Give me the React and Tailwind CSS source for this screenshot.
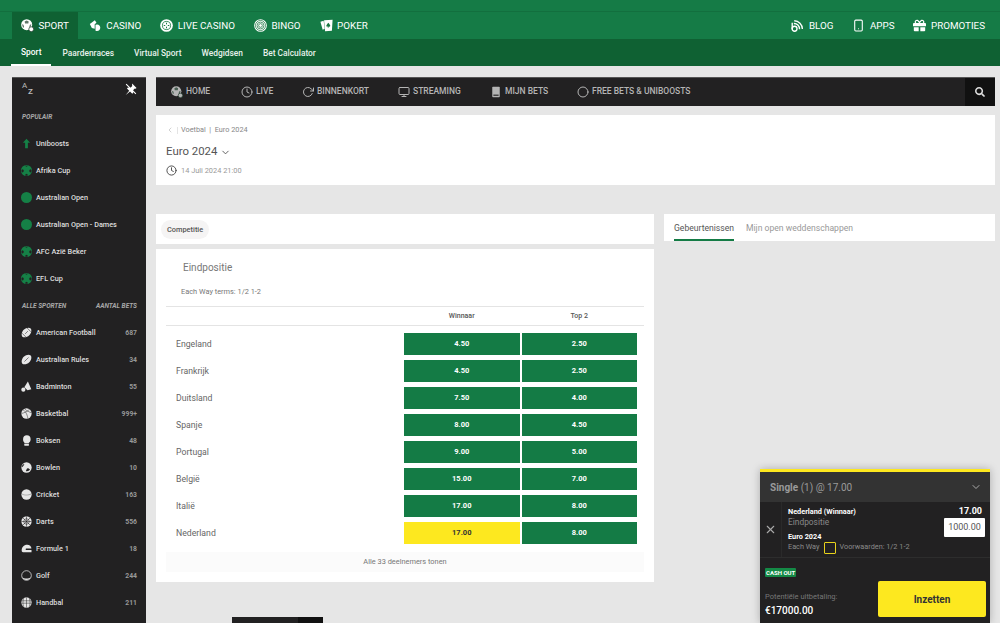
import React from "react";
import { FaSearch, FaGift } from "react-icons/fa";
import { FiClock, FiChevronDown, FiChevronLeft, FiX, FiMonitor, FiCircle, FiSmartphone, FiRotateCw } from "react-icons/fi";

const Ball = ({ className = "" }) => (
  <svg viewBox="0 0 16 16" className={className}>
    <circle cx="8" cy="8" r="8" fill="currentColor" />
    <path d="M5.800 1.200 8 2.600l2.200-1.400zM1.800 6.200 4 7.400 3.600 10 1.600 11 .4 8.500zM14.200 6.200 12 7.400l.4 2.600 2 1 1.200-2.500zM6 14 8 12.800 10 14l-.6 1.800H6.600z" fill="#222122" />
  </svg>
);

const SportBall = ({ className = "" }) => (
  <svg viewBox="0 0 16 16" className={className}>
    <circle cx="7" cy="7" r="6.800" fill="currentColor" />
    <path d="M4.500 3 7 1.800 9.500 3 9 5.500H5zM1.200 6.500 3 7l.8 2.500L2.600 11zM12.800 6.500 11 7l-.8 2.500 1.200 1.500z" fill="#1c3a2a" opacity="0.7" />
    <circle cx="12.600" cy="12.600" r="3" fill="currentColor" stroke="#1c3a2a" strokeWidth="0.900" />
  </svg>
);

const Casino = ({ className = "" }) => (
  <svg viewBox="0 0 16 16" className={className} fill="currentColor">
    <path d="M1 6 7.200 1.500l2 3.200L7 6.500v5.500L3.500 11z" />
    <path d="M8 7.200a4 4 0 1 1 1.500 7.500c-.8 0-1.200-.3-1.500-.7z" />
  </svg>
);

const LiveCasino = ({ className = "" }) => (
  <svg viewBox="0 0 16 16" className={className}>
    <circle cx="8" cy="8" r="7.800" fill="currentColor" />
    <circle cx="8" cy="8" r="5" fill="none" stroke="#16763f" strokeWidth="1" />
    <path d="M8 4.600v6.800M4.600 8h6.800" stroke="#16763f" strokeWidth="1.200" />
    <circle cx="8" cy="8" r="1.600" fill="currentColor" />
  </svg>
);

const Bingo = ({ className = "" }) => (
  <svg viewBox="0 0 16 16" className={className}>
    <circle cx="8" cy="8" r="7.800" fill="currentColor" />
    <circle cx="8" cy="8" r="6.200" fill="none" stroke="#16763f" strokeWidth="0.900" />
    <circle cx="8" cy="8" r="4.200" fill="none" stroke="#16763f" strokeWidth="0.900" />
    <circle cx="8" cy="8" r="2.300" fill="none" stroke="#16763f" strokeWidth="0.900" />
  </svg>
);

const Poker = ({ className = "" }) => (
  <svg viewBox="0 0 16 16" className={className} fill="currentColor">
    <path d="M.5 3.400 4.500 2l1.200 10-2.400 1.200z" />
    <path d="M5 1.600 15.500 1 14.600 14.400 6.200 15z" />
    <path d="M10.200 4.600c1.600 2 2.600 2.900 2.400 4-.2 1-1.400 1.200-2 .4l.4 1.500H9.400l.4-1.500c-.7.8-1.900.5-2-.5-.1-1 .9-1.900 2.400-3.900z" fill="#16763f" />
  </svg>
);

const Blog = ({ className = "" }) => (
  <svg viewBox="0 0 16 16" className={className} fill="none" stroke="currentColor" strokeWidth="1.700">
    <path d="M1.500 4.500v8" />
    <circle cx="4.400" cy="12" r="3" />
    <path d="M3.500 5.500a6.800 6.800 0 0 1 7 7" />
    <path d="M4 2.200a10.200 10.200 0 0 1 10 10" />
  </svg>
);

const Pin = ({ className = "" }) => (
  <svg viewBox="0 0 16 16" className={className} fill="currentColor">
    <path d="M9.500.6 15.400 6.500l-1.300 1.100-1-.3-2.400 2.400.3 3.400-1.300 1.300-3-3-5.900 4.800 4.800-5.900-3-3 1.300-1.300 3.400.3 2.400-2.400-.3-1z" />
    <path d="M1.500 1.500 14.500 14.500" stroke="currentColor" strokeWidth="1.500" />
  </svg>
);

const Boost = ({ className = "" }) => (
  <svg viewBox="0 0 16 16" className={className} fill="currentColor">
    <path d="M8 1 13.200 7H10v8H6V7H2.800z" />
  </svg>
);

const Shuttle = ({ className = "" }) => (
  <svg viewBox="0 0 16 16" className={className} fill="currentColor">
    <path d="M10 .8 15 12l-5.500 1.600L4.800 9z" />
    <circle cx="3.400" cy="12.600" r="3" />
  </svg>
);

const Glove = ({ className = "" }) => (
  <svg viewBox="0 0 16 16" className={className} fill="currentColor">
    <path d="M3 6c0-3 2-5.500 5.500-5.500S14 3 14 6s-1.200 4-2.500 5v1H4.800v-1.300C3.800 9.800 3 8.500 3 6z" />
    <rect x="4.800" y="12.800" width="6.700" height="2.700" rx="0.500" />
  </svg>
);

const Bowl = ({ className = "" }) => (
  <svg viewBox="0 0 16 16" className={className}>
    <circle cx="8" cy="8" r="7.500" fill="currentColor" />
    <path d="M1 8c2-1 3-3 4-5-2 0-4 2-4 5zM7 13c1.500-2 1-4 3-4 1 0 2 1 3 2-1 2-4 3-6 2z" fill="#222122" />
  </svg>
);

const Cricket = ({ className = "" }) => (
  <svg viewBox="0 0 16 16" className={className}>
    <circle cx="8" cy="8" r="7.500" fill="currentColor" />
    <path d="M.8 7c4 2.400 10 2.400 14.400 0" stroke="#222122" strokeWidth="0.700" fill="none" strokeDasharray="1 0.600" />
  </svg>
);

const Darts = ({ className = "" }) => (
  <svg viewBox="0 0 16 16" className={className}>
    <circle cx="8" cy="8" r="7.500" fill="currentColor" />
    <path d="M8 .5v15M.5 8h15M2.700 2.700l10.600 10.600M13.300 2.700 2.700 13.300" stroke="#222122" strokeWidth="0.800" />
    <circle cx="8" cy="8" r="4" fill="none" stroke="#222122" strokeWidth="0.800" />
  </svg>
);

const Helmet = ({ className = "" }) => (
  <svg viewBox="0 0 16 16" className={className} fill="currentColor">
    <path d="M1 11C1 6 4 2.500 9 2.500c3.500 0 6 2.500 6.200 5.500H7.500c-1 0-1 2 0 2h7.800v3.500H3C1.800 13.500 1 12.500 1 11z" />
  </svg>
);

const Golf = ({ className = "" }) => (
  <svg viewBox="0 0 16 16" className={className}>
    <circle cx="8" cy="8" r="7" fill="none" stroke="currentColor" strokeWidth="1.100" />
    <path d="M1.500 10a7 7 0 0 0 13 0c-3 3-10 3-13 0z" fill="currentColor" />
  </svg>
);

const Handball = ({ className = "" }) => (
  <svg viewBox="0 0 16 16" className={className}>
    <circle cx="8" cy="8" r="7.500" fill="currentColor" />
    <path d="M1 5.500h14M.6 9h14.800M8 .5v15M4 1.500c-1.500 4-1.500 9 0 13M12 1.500c1.500 4 1.500 9 0 13" stroke="#222122" strokeWidth="0.700" fill="none" />
  </svg>
);

const Aussie = ({ className = "" }) => (
  <svg viewBox="0 0 16 16" className={className}>
    <path d="M2 14C0 12 1 7 4 4s8-4 10-2 1 7-2 10-8 4-10 2z" fill="currentColor" />
    <path d="M5 11 11 5" stroke="#222122" strokeWidth="0.800" />
  </svg>
);

const American = ({ className = "" }) => (
  <svg viewBox="0 0 16 16" className={className}>
    <path d="M2 14C0 12 1 7 4 4s8-4 10-2 1 7-2 10-8 4-10 2z" fill="currentColor" />
    <path d="M1.500 9 7 14.500M9 1.500 14.500 7" stroke="#222122" strokeWidth="0.800" />
    <path d="M6 10l4-4" stroke="#222122" strokeWidth="0.800" />
  </svg>
);

const Basket = ({ className = "" }) => (
  <svg viewBox="0 0 16 16" className={className}>
    <circle cx="8" cy="8" r="7.500" fill="currentColor" />
    <path d="M2.700 2.700c3 1 6 5 7.300 12.500M.8 8c4-1 9-3 11.800-6.500M5 1c3 3 7 5 10.500 6" stroke="#222122" strokeWidth="0.700" fill="none" />
  </svg>
);

const Slip2 = ({ className = "" }) => (
  <svg viewBox="0 0 16 16" className={className} fill="currentColor">
    <rect x="3" y="1" width="10" height="14" rx="1" />
    <rect x="4.500" y="11.500" width="7" height="1.500" fill="#222122" />
  </svg>
);

const NavItem = ({ icon: I, label, active }) => (
  <div className={`flex items-center gap-[4.5px] h-full ${active ? "bg-[#0f6133] pl-[9px] pr-[9px]" : ""}`}>
    <I className="w-[13px] h-[13px] shrink-0 text-white" />
    <span className="text-[9.8px] leading-none text-white">{label}</span>
  </div>
);

const SubItem = ({ label, active }) => (
  <div className={`h-full flex items-center pt-[1px] text-[8.4px] font-medium ${active ? "border-b-2 border-white text-white px-[10px]" : "text-[#e8f1ec]"}`}>{label}</div>
);

const popular = [
  ["Uniboosts", Boost],
  ["Afrika Cup", Ball],
  ["Australian Open", "dot"],
  ["Australian Open - Dames", "dot"],
  ["AFC Azië Beker", Ball],
  ["EFL Cup", Ball],
];

const sports = [
  ["American Football", "687", American],
  ["Australian Rules", "34", Aussie],
  ["Badminton", "55", Shuttle],
  ["Basketbal", "999+", Basket],
  ["Boksen", "48", Glove],
  ["Bowlen", "10", Bowl],
  ["Cricket", "163", Cricket],
  ["Darts", "556", Darts],
  ["Formule 1", "18", Helmet],
  ["Golf", "244", Golf],
  ["Handbal", "211", Handball],
];

const odds = [
  ["Engeland", "4.50", "2.50"],
  ["Frankrijk", "4.50", "2.50"],
  ["Duitsland", "7.50", "4.00"],
  ["Spanje", "8.00", "4.50"],
  ["Portugal", "9.00", "5.00"],
  ["België", "15.00", "7.00"],
  ["Italië", "17.00", "8.00"],
  ["Nederland", "17.00", "8.00"],
];

const Dot = ({ className = "" }) => (
  <svg viewBox="0 0 16 16" className={className} fill="currentColor"><circle cx="8" cy="8" r="8" /></svg>
);

const Sidebar = () => (
  <aside className="w-[134px] shrink-0 bg-[#222122] h-[560px] overflow-hidden border-t border-[#555]">
    <div className="h-[22px] flex items-center justify-between pl-[10px] pr-[9px] text-[#bbb]">
      <div className="relative w-[14px] h-[14px] text-[8px] leading-none">
        <span className="absolute left-0 top-0">A</span>
        <span className="absolute left-[6px] top-[6px] font-bold">Z</span>
      </div>
      <Pin className="w-[12px] h-[12px] text-white" />
    </div>
    <div className="h-[30px] pt-[6px] flex items-center pl-[10px] text-[6.5px] italic font-bold text-[#a8a8a8]">POPULAIR</div>
    {popular.map(([n, I]) => {
      const C = I === "dot" ? Dot : I;
      return (
        <div key={n} className="h-[27px] flex items-center pl-[9px]">
          <C className="w-[11px] h-[11px] text-[#158046] mr-[4px] shrink-0" />
          <span className="pt-[2px] text-[7.3px] font-medium text-[#dedede] whitespace-nowrap">{n}</span>
        </div>
      );
    })}
    <div className="h-[27px] pt-[2px] flex items-center justify-between pl-[10px] pr-[9px] text-[6.5px] italic font-bold text-[#a8a8a8]">
      <span>ALLE SPORTEN</span>
      <span>AANTAL BETS</span>
    </div>
    {sports.map(([n, c, I]) => (
      <div key={n} className="h-[27px] flex items-center pl-[9px] pr-[9px]">
        <I className="w-[11px] h-[11px] text-[#e6e6e6] mr-[4px] shrink-0" />
        <span className="pt-[2px] text-[7.3px] font-medium text-[#dedede] flex-1 whitespace-nowrap">{n}</span>
        <span className="pt-[1px] text-[6.8px] font-bold text-[#999]">{c}</span>
      </div>
    ))}
  </aside>
);

const Tab = ({ icon: I, label, w }) => (
  <div className={`flex items-center gap-[3px] ${w}`}>
    <I className="w-[12px] h-[12px] text-[#b5b5b5] shrink-0" />
    <span className="text-[8.5px] font-medium text-[#b5b5b5] whitespace-nowrap">{label}</span>
  </div>
);

const Odd = ({ v, selected }) => (
  <div className={`h-[22px] flex items-center justify-center text-[7.5px] font-bold ${selected ? "bg-[#fde81f] text-[#333]" : "bg-[#147b45] text-white"}`}>{v}</div>
);

const Slip = () => (
  <div className="absolute left-[760px] top-[469px] w-[230px] h-[154px] bg-[#222122] border-t-[3px] border-[#fde81f] shadow-[0_0_8px_rgba(0,0,0,0.25)]">
    <div className="h-[30px] bg-[#333333] flex items-center justify-between pl-[10px] pr-[8px]">
      <span className="text-[10px] text-[#9a9a9a]"><b className="font-bold">Single</b> (1) @ 17.00</span>
      <FiChevronDown className="w-[12px] h-[12px] text-[#aaa]" />
    </div>
    <div className="h-[56px] flex border-b border-[#2d2d2d]">
      <div className="w-[22px] shrink-0 flex items-center justify-center border-r border-[#2a2a2a]">
        <FiX className="w-[13px] h-[13px] text-[#aaa]" />
      </div>
      <div className="flex-1 pl-[6px] pt-[5px] relative">
        <div className="text-[7.3px] leading-[9px] font-bold text-white">Nederland (Winnaar)</div>
        <div className="text-[8.4px] leading-[10px] text-[#888] mt-[0.5px]">Eindpositie</div>
        <div className="text-[7.3px] leading-[9px] font-bold text-white mt-[5px]">Euro 2024</div>
        <div className="flex items-center mt-[1px] text-[7.3px] text-[#8a8a8a]">
          <span>Each Way</span>
          <span className="w-[12px] h-[12px] border-[1.5px] border-[#e8d21c] rounded-[1px] ml-[4px] mr-[4px]" />
          <span>Voorwaarden: 1/2 1-2</span>
        </div>
        <div className="absolute right-[8px] top-[3px] text-[9px] font-bold text-white">17.00</div>
        <div className="absolute right-[5px] top-[16px] w-[41px] h-[19px] bg-white rounded-[1px] flex items-center justify-center text-[9px] text-[#555]">1000.00</div>
      </div>
    </div>
    <div className="relative flex-1 px-[5px]">
      <span className="inline-block mt-[7px] bg-[#148a46] text-white text-[6px] font-bold leading-[9px] px-[1px] rounded-[1px]">CASH OUT</span>
      <div className="text-[7.5px] text-[#777] mt-[10px] leading-[10px]">Potentiële uitbetaling:</div>
      <div className="text-[10px] font-medium text-white mt-[3px] leading-[12px]">€17000.00</div>
      <button className="absolute right-[4px] top-[23px] w-[108px] h-[36px] bg-[#fde81f] rounded-[2px] text-[10px] font-bold text-[#333]">Inzetten</button>
    </div>
  </div>
);

export default function App() {
  return (
    <div className="relative w-[1000px] h-[623px] overflow-hidden bg-[#e6e6e6] font-['Roboto',sans-serif]">
      <header>
        <div className="h-[12px] bg-[#157b46] border-b border-[#126f3e]" />
        <div className="h-[27px] bg-[#157b46] flex items-center justify-between pl-[12px] pr-[15px]">
          <div className="flex items-center h-full gap-[11px]">
            <NavItem icon={SportBall} label="SPORT" active />
            <div className="flex items-center h-full gap-[19px]">
              <NavItem icon={Casino} label="CASINO" />
              <NavItem icon={LiveCasino} label="LIVE CASINO" />
              <NavItem icon={Bingo} label="BINGO" />
              <NavItem icon={Poker} label="POKER" />
            </div>
          </div>
          <div className="flex items-center h-full gap-[19px]">
            <NavItem icon={Blog} label="BLOG" />
            <NavItem icon={FiSmartphone} label="APPS" />
            <NavItem icon={FaGift} label="PROMOTIES" />
          </div>
        </div>
        <div className="h-[27px] bg-[#0f6133] flex items-center pl-[11px] gap-[20px]">
          <div className="-mr-[9px] h-full"><SubItem label="Sport" active /></div>
          <SubItem label="Paardenraces" />
          <SubItem label="Virtual Sport" />
          <SubItem label="Wedgidsen" />
          <SubItem label="Bet Calculator" />
        </div>
      </header>
      <div className="flex pl-[12px] pr-[5px] pt-[11px] gap-[10px]">
        <Sidebar />
        <main className="flex-1 min-w-0">
          <div className="h-[29px] bg-[#222122] border-t border-[#555] flex items-center justify-between">
            <div className="flex items-center pl-[15px] pb-[1px]">
              <Tab icon={SportBall} label="HOME" w="w-[70px]" />
              <Tab icon={FiClock} label="LIVE" w="w-[61px]" />
              <Tab icon={FiRotateCw} label="BINNENKORT" w="w-[96px]" />
              <Tab icon={FiMonitor} label="STREAMING" w="w-[92px]" />
              <Tab icon={Slip2} label="MIJN BETS" w="w-[87px]" />
              <Tab icon={FiCircle} label="FREE BETS & UNIBOOSTS" w="" />
            </div>
            <div className="w-[30px] h-full bg-[#111] flex items-center justify-center">
              <FaSearch className="w-[10px] h-[10px] text-[#ddd]" />
            </div>
          </div>
          <div className="mt-[9px] h-[70px] bg-white pl-[10px] pt-[9px]">
            <div className="flex items-center text-[7.3px] text-[#888] h-[12px]">
              <FiChevronLeft className="w-[8px] h-[8px] text-[#bbb] mr-[3px]" />
              <span className="w-px h-[7px] bg-[#e4e4e4] mr-[3px]" />
              <span>Voetbal&nbsp;&nbsp;|&nbsp;&nbsp;Euro 2024</span>
            </div>
            <div className="flex items-center mt-[8px] text-[#555] text-[11.4px] h-[16px]">
              Euro 2024 <FiChevronDown className="w-[11px] h-[11px] ml-[3px]" />
            </div>
            <div className="flex items-center mt-[5px] text-[7.4px] text-[#999] h-[11px]">
              <FiClock className="w-[11px] h-[11px] text-[#444] mr-[4px]" /> 14 Juli 2024 21:00
            </div>
          </div>
          <div className="flex mt-[29px] gap-[10px]">
            <div className="w-[498px] shrink-0">
              <div className="h-[30px] bg-white flex items-center pl-[5px]">
                <span className="h-[19px] px-[6px] pt-[1px] rounded-full bg-[#f5f4f4] text-[7.4px] font-medium text-[#555] flex items-center">Competitie</span>
              </div>
              <div className="mt-[5px] bg-white h-[333px] px-[10px]">
                <div className="pl-[17px] pt-[13px] text-[10px] leading-[12px] text-[#777]">Eindpositie</div>
                <div className="pl-[15px] mt-[13px] text-[7.4px] leading-[10px] text-[#777]">Each Way terms: 1/2 1-2</div>
                <div className="mt-[9px] h-[20px] border-y border-[#e4e4e4] flex items-center text-[7px] font-medium text-[#555]">
                  <div className="w-[238px]" />
                  <div className="w-[115.5px] text-center">Winnaar</div>
                  <div className="w-[2px]" />
                  <div className="w-[115.5px] text-center">Top 2</div>
                </div>
                <div className="mt-[7px] flex flex-col gap-[5px]">
                  {odds.map(([n, a, b], i) => (
                    <div key={n} className="flex items-center">
                      <div className="w-[238px] pl-[10px] pt-[1px] text-[8.7px] text-[#666]">{n}</div>
                      <div className="w-[115.5px]"><Odd v={a} selected={i === 7} /></div>
                      <div className="w-[2px]" />
                      <div className="w-[115.5px]"><Odd v={b} /></div>
                    </div>
                  ))}
                </div>
                <div className="mt-[8px] h-[20px] bg-[#fbfbfb] flex items-center justify-center text-[7.4px] text-[#777]">Alle 33 deelnemers tonen</div>
              </div>
            </div>
            <div className="flex-1 min-w-0">
              <div className="h-[27px] bg-white flex pl-[10px] gap-[12px] text-[8.6px]">
                <div className="h-full pt-[4px] flex items-center border-b-2 border-[#147b45] text-[#555]">Gebeurtenissen</div>
                <div className="h-full pt-[2px] flex items-center text-[#999]">Mijn open weddenschappen</div>
              </div>
            </div>
          </div>
        </main>
      </div>
      <div className="absolute left-[232px] top-[617px] w-[91px] h-[6px] bg-[#222122] flex justify-end">
        <div className="w-[25px] bg-[#111]" />
      </div>
      <Slip />
    </div>
  );
}
